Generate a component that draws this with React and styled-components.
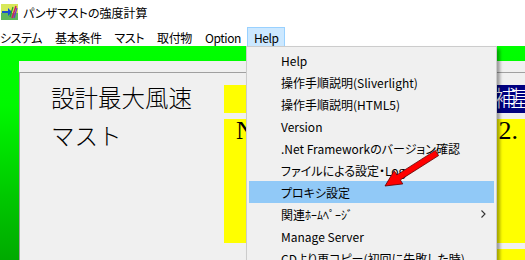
import React from 'react';
import styled, { createGlobalStyle } from 'styled-components';

const GlobalStyle = createGlobalStyle`
  body {
    margin: 0;
    overflow: hidden;
    background: #ffffff;
  }
`;

const uiFont = `"Noto Sans CJK JP", "Noto Sans", sans-serif`;
const serifFont = `"Liberation Serif", "Noto Sans CJK JP", serif`;

const Window = styled.div`
  position: relative;
  width: 525px;
  height: 260px;
  overflow: hidden;
  display: flex;
  flex-direction: column;
  font-family: ${uiFont};
  font-feature-settings: "palt";
  font-size: 12px;
  color: #000;
`;

const TitleBar = styled.div`
  height: 24px;
  flex: none;
  display: flex;
  align-items: center;
  gap: 5px;
  padding-left: 1px;
  background: #ffffff;
`;

const MenuBar = styled.div`
  height: 22px;
  flex: none;
  display: flex;
  align-items: flex-start;
  background: #ffffff;
  letter-spacing: -0.4px;
`;

const MenuTitle = styled.div`
  height: 18px;
  margin-top: 3px;
  padding: 0 5px 0 6px;
  display: flex;
  align-items: center;
  border: 1px solid ${({ $active }) => ($active ? '#99d1ff' : 'transparent')};
  background: ${({ $active }) => ($active ? '#cce8ff' : 'transparent')};

  &:first-child {
    padding-left: 0;
    border-left: none;
  }
`;

const Workspace = styled.div`
  flex: 1;
  padding: 15px 0 0 19px;
  background: linear-gradient(
    to bottom,
    #00ff00 0px,
    #00f800 60px,
    #00c800 150px,
    #00aa00 214px
  );
`;

const Panel = styled.div`
  width: 620px;
  height: 100%;
  padding-top: 11px;
  box-sizing: border-box;
  background: #f0f0f0;
`;

const Sheet = styled.div`
  height: 100%;
  border-top: 1px solid #a0a0a0;
  border-left: 1px solid #a0a0a0;
  padding-top: 12px;
  box-sizing: border-box;
`;

const Row = styled.div`
  display: grid;
  grid-template-columns: 204px 1fr;
  margin-bottom: 6px;
`;

const Label = styled.div`
  padding-left: 31px;
  padding-top: ${({ $offset }) => $offset || 0}px;
  font-family: ${serifFont};
  font-feature-settings: normal;
  font-weight: 300;
  font-size: 23.5px;
  line-height: 28px;
  white-space: nowrap;
`;

const Cells = styled.div`
  display: flex;
  margin-left: ${({ $indent }) => $indent || 0}px;
`;

const ValueBox = styled.div`
  width: ${({ $w }) => $w}px;
  height: ${({ $h }) => $h}px;
  background: #ffff00;
  display: flex;
  justify-content: space-between;
  padding: 2px 46px 0 12px;
  box-sizing: border-box;
  font-family: ${serifFont};
  font-feature-settings: normal;
  font-size: 26px;
  line-height: 20px;
`;

const HeadBox = styled.div`
  width: 80px;
  height: 28px;
  background: #000080;
  color: #ffffff;
  font-family: ${serifFont};
  font-feature-settings: normal;
  font-weight: 300;
  font-size: 22px;
  letter-spacing: -6px;
  line-height: 28px;
  white-space: nowrap;
`;

const Dropdown = styled.div`
  position: absolute;
  top: 46px;
  left: 246px;
  width: 251px;
  padding: 2px;
  box-sizing: border-box;
  background: #f0f0f0;
  border: 1px solid #cccccc;
  box-shadow: 3px 3px 3px rgba(0, 0, 0, 0.35);
`;

const Entry = styled.div`
  height: 22px;
  display: flex;
  align-items: center;
  justify-content: space-between;
  padding: 0 8px 0 32px;
  white-space: nowrap;
  background: ${({ $selected }) => ($selected ? '#91c9f7' : 'transparent')};
`;

const Pointer = styled.svg`
  position: absolute;
  left: 380px;
  top: 145px;
  width: 65px;
  height: 45px;
`;

function AppIcon() {
  return (
    <svg width="17" height="16" viewBox="0 0 17 16">
      <rect x="0" y="0" width="17" height="16" fill="#d8e85a" />
      <rect x="0" y="9" width="17" height="7" fill="#5fb85a" />
      <path d="M1 7 h6 v-3 l4 4 -4 4 v-3 h-6z" fill="#1a4fd0" />
      <path d="M11 14 L15 2" stroke="#d01a60" strokeWidth="1.5" />
      <path d="M13 14 L16 4" stroke="#7a2ad0" strokeWidth="1.2" />
      <path d="M9 13 L12 3" stroke="#2a9a2a" strokeWidth="1.2" />
    </svg>
  );
}

function Chevron() {
  return (
    <svg width="5" height="8" viewBox="0 0 5 8">
      <path d="M0.5 0.5 L4 4 L0.5 7.5" fill="none" stroke="#333" strokeWidth="1.1" />
    </svg>
  );
}

const menuTitles = ['システム', '基本条件', 'マスト', '取付物', 'Option', 'Help'];

const helpEntries = [
  'Help',
  '操作手順説明(Sliverlight)',
  '操作手順説明(HTML5)',
  'Version',
  '.Net Frameworkのバージョン確認',
  'ファイルによる設定・Log',
  'プロキシ設定',
  '関連ﾎｰﾑﾍﾟｰｼﾞ',
  'Manage Server',
  'CDより再コピー(初回に失敗した時)',
];

export default function App() {
  return (
    <>
      <GlobalStyle />
      <Window>
        <TitleBar>
          <AppIcon />
          <span>パンザマストの強度計算</span>
        </TitleBar>
        <MenuBar>
          {menuTitles.map((t) => (
            <MenuTitle key={t} $active={t === 'Help'}>{t}</MenuTitle>
          ))}
        </MenuBar>
        <Workspace>
          <Panel>
            <Sheet>
              <Row>
                <Label>設計最大風速</Label>
                <Cells>
                  <ValueBox $w={270} $h={28} />
                  <HeadBox>補基準</HeadBox>
                </Cells>
              </Row>
              <Row>
                <Label $offset={4}>マスト</Label>
                <Cells>
                  <ValueBox $w={340} $h={124}>
                    <span>N</span>
                    <span>2.</span>
                  </ValueBox>
                </Cells>
              </Row>
              <Row>
                <Label $offset={12}>取付物の質量</Label>
                <Cells $indent={40}>
                  <ValueBox $w={300} $h={40} />
                </Cells>
              </Row>
            </Sheet>
          </Panel>
        </Workspace>

        <Dropdown>
          {helpEntries.map((e) => (
            <Entry key={e} $selected={e === 'プロキシ設定'}>
              <span>{e}</span>
              {e === '関連ﾎｰﾑﾍﾟｰｼﾞ' && <Chevron />}
            </Entry>
          ))}
        </Dropdown>

        <Pointer viewBox="0 0 65 45">
          <polygon
            points="55.4,5.4 58.6,10.6 20.3,34.9 22.8,38.9 5,41 14.2,25.7 16.9,29.9"
            fill="#ff0000"
            stroke="#5a0000"
            strokeWidth="0.8"
            strokeLinejoin="round"
          />
        </Pointer>
      </Window>
    </>
  );
}
